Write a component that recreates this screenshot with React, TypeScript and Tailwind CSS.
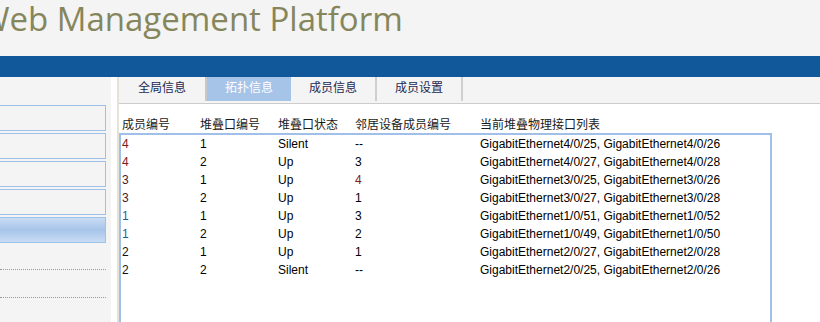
const tabs = ['全局信息', '拓扑信息', '成员信息', '成员设置'];

const rows = [
  ['4', '1', 'Silent', '--', 'GigabitEthernet4/0/25, GigabitEthernet4/0/26'],
  ['4', '2', 'Up', '3', 'GigabitEthernet4/0/27, GigabitEthernet4/0/28'],
  ['3', '1', 'Up', '4', 'GigabitEthernet3/0/25, GigabitEthernet3/0/26'],
  ['3', '2', 'Up', '1', 'GigabitEthernet3/0/27, GigabitEthernet3/0/28'],
  ['1', '1', 'Up', '3', 'GigabitEthernet1/0/51, GigabitEthernet1/0/52'],
  ['1', '2', 'Up', '2', 'GigabitEthernet1/0/49, GigabitEthernet1/0/50'],
  ['2', '1', 'Up', '1', 'GigabitEthernet2/0/27, GigabitEthernet2/0/28'],
  ['2', '2', 'Silent', '--', 'GigabitEthernet2/0/25, GigabitEthernet2/0/26'],
];

// member id tint, like the original page
const memberColor: Record<string, string> = {
  '4': 'text-[#801a1a]',
  '3': 'text-[#4a1a28]',
  '1': 'text-[#1a5e9c]',
  '2': 'text-[#111111]',
};

export default function App() {
  return (
    <div className="w-[820px] h-[322px] overflow-hidden bg-white font-['Liberation_Sans','Noto_Sans_CJK_SC',sans-serif]">
      {/* Header */}
      <div className="h-[56px] bg-[#f4f4f4] overflow-hidden">
        <h1 className="-ml-[21px] whitespace-nowrap text-[33px] leading-[38px] text-[#86865c] font-['Open_Sans',sans-serif]">
          Web Management Platform
        </h1>
      </div>
      <div className="h-[21px] bg-[#11589a]" />

      <div className="flex h-[245px]">
        {/* Sidebar */}
        <div className="w-[111px] bg-[#f4f4f4] pt-[28px] flex-shrink-0">
          {[0, 1, 2, 3].map((i) => (
            <div key={i} className="-ml-[2px] w-[108px] h-[26px] mb-[2px] border border-[#9ec1ea] bg-[#f4f4f4]" />
          ))}
          <div className="-ml-[2px] w-[108px] h-[26px] border border-[#9ec1ea] bg-gradient-to-b from-[#c9dcf4] via-[#a7c4ea] to-[#c9dcf4]" />
          <div className="w-[106px] mt-[26px] border-t border-dotted border-[#9a9a9a]" />
          <div className="w-[106px] mt-[27px] border-t border-dotted border-[#9a9a9a]" />
        </div>
        <div className="w-[6px] bg-white flex-shrink-0" />
        <div className="w-[2px] bg-[#e6e2d4] flex-shrink-0" />

        {/* Main */}
        <div className="flex-1 flex flex-col">
          <div className="h-[27px] bg-[#f4f4f4] border-b border-[#cccccc] flex">
            {tabs.map((t, i) => (
              <div
                key={t}
                className={`w-[86px] h-[24px] pb-[4px] flex items-center justify-center text-[12px] font-['Noto_Sans_CJK_SC',sans-serif] ${
                  i === 1
                    ? 'bg-[#a6c3e8] text-white border-l-2 border-[#c8c8c8]'
                    : 'text-[#1e2a52]'
                } ${i >= 2 ? 'border-r-2 border-[#cfcfcf]' : ''}`}
              >
                {t}
              </div>
            ))}
          </div>

          <div className="flex text-[12px] leading-[16px] text-[#1a1a1a] pt-[12px] pb-[1px] font-['Noto_Sans_CJK_SC',sans-serif]">
            <div className="w-[81px] pl-[3px]">成员编号</div>
            <div className="w-[78px]">堆叠口编号</div>
            <div className="w-[77px]">堆叠口状态</div>
            <div className="w-[125px]">邻居设备成员编号</div>
            <div>当前堆叠物理接口列表</div>
          </div>

          <div className="w-[653px] flex-1 border-t-2 border-l-2 border-r-2 border-[#a0c0ea] text-[12px] leading-[18px] text-black">
            {rows.map((r, i) => (
              <div key={i} className="flex">
                <div className={`w-[79px] pl-[1px] ${memberColor[r[0]]}`}>{r[0]}</div>
                <div className="w-[78px]">{r[1]}</div>
                <div className="w-[77px]">{r[2]}</div>
                <div className={`w-[125px] ${r[3] === '4' ? 'text-[#801a1a]' : ''}`}>{r[3]}</div>
                <div>{r[4]}</div>
              </div>
            ))}
          </div>
        </div>
      </div>
    </div>
  );
}
